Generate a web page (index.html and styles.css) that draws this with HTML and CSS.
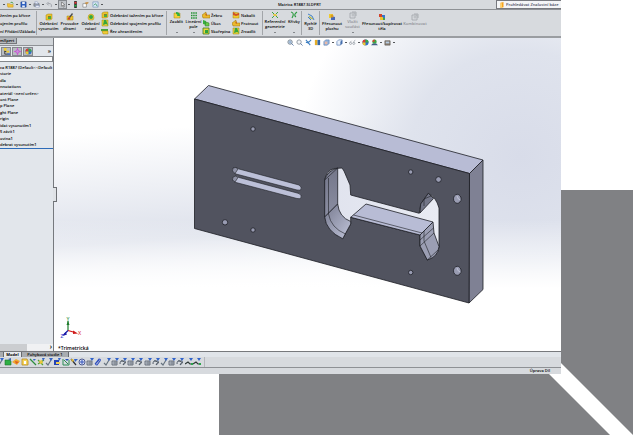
FILE: index.html
```
<!DOCTYPE html>
<html lang="cs">
<head>
<meta charset="utf-8">
<title>Matrica R1887.SLDPRT</title>
<link rel="stylesheet" href="styles.css">
</head>
<body>
<svg class="defs" aria-hidden="true">
  <symbol id="open" viewBox="0 0 8 8"><path d="M0 3h3l1 1h3v3H1z" fill="#f3c53a" stroke="#b98a1b" stroke-width=".5"/><path d="M4 2q2-2 3 1" fill="none" stroke="#3a9a3a"/></symbol>
  <symbol id="save" viewBox="0 0 8 8"><path d="M1 1h6v6H1z" fill="#2f62c4" stroke="#1c3f8c" stroke-width=".6"/><path d="M2.500 1h3v2.500h-3zM2.500 5h3v2h-3z" fill="#e8eefa"/></symbol>
  <symbol id="print" viewBox="0 0 8 8"><path d="M1 3h6v3H1z" fill="#9aa0aa" stroke="#5d636d" stroke-width=".6"/><path d="M2 1h3l1 2H3zM3 5h4v2H3z" fill="#fff" stroke="#6f86b8" stroke-width=".5"/></symbol>
  <symbol id="undo" viewBox="0 0 8 8"><path d="M2 3h3q2 1 1 4M3 1L1 3l2 2" fill="none" stroke="#9a9ea6"/></symbol>
  <symbol id="cursor" viewBox="0 0 8 8"><path d="M3 1v5l1-1 1 2 1-.5-1-2h1.500z" fill="#fff" stroke="#444" stroke-width=".6"/></symbol>
  <symbol id="light" viewBox="0 0 8 8"><path d="M2.500 0h3v8h-3z" fill="#333"/><circle cx="4" cy="2" r="1.200" fill="#e33"/><circle cx="4" cy="5.500" r="1.200" fill="#2b4"/></symbol>
  <symbol id="props" viewBox="0 0 8 8"><path d="M1 3h4v4H1z" fill="#fff" stroke="#777" stroke-width=".7"/><path d="M3 2l3-1 2 1-3 2z" fill="#c69046"/></symbol>
  <symbol id="options" viewBox="0 0 8 8"><path d="M1 1h6v6H1z" fill="#dbe9f8" stroke="#6c8db5" stroke-width=".7"/><path d="M2 5l2-2 2 3" fill="none" stroke="#3e9a68"/></symbol>
  <symbol id="book" viewBox="0 0 8 8"><path d="M2 1l4-1v7l-4 1z" fill="#f7a31e"/><path d="M2 1l2 1v6l-2-1z" fill="#ffd36a"/></symbol>
  <symbol id="cut" viewBox="0 0 8 8"><path d="M1 2l2-1h4v5l-2 1H1z" fill="#e9c32c" stroke="#a98410" stroke-width=".5"/><path d="M3 3h3v3H3z" fill="#4fae3a"/><path d="M3 4l1-1 1 1z" fill="#c33"/></symbol>
  <symbol id="hole" viewBox="0 0 8 8"><path d="M1 3h6v4H1z" fill="#edc22c" stroke="#a98410" stroke-width=".5"/><path d="M3 4l3-4 1 1-3 4z" fill="#4a4a4a"/><circle cx="3" cy="5.500" r="1.200" fill="#c4432a"/></symbol>
  <symbol id="revolve" viewBox="0 0 8 8"><path d="M1 5q0-4 3-4t3 4l-1 2H2z" fill="#f1d23a" stroke="#a98410" stroke-width=".5"/><circle cx="4" cy="4" r="2" fill="#37a83d"/></symbol>
  <symbol id="loft" viewBox="0 0 8 8"><path d="M1 1h6v6H1z" fill="#edd13a" stroke="#8f8b10" stroke-width=".5"/><path d="M2 6l1-5h2l2 5-2-1z" fill="#36a63d"/></symbol>
  <symbol id="bound" viewBox="0 0 8 8"><path d="M0 2h7v2H0z" fill="#46a53a"/><path d="M1 4h6v3H2z" fill="#f0cc35" stroke="#a98410" stroke-width=".5"/></symbol>
  <symbol id="fillet" viewBox="0 0 8 8"><path d="M1 2h6v5H1z" fill="#f1d23a" stroke="#a98410" stroke-width=".5"/><path d="M3 1q4 0 4 4H4q1-2-1-2z" fill="#2fae45"/></symbol>
  <symbol id="pattern" viewBox="0 0 8 8"><path d="M1 2h6M1 4.500h6M1 7h6" stroke="#249334" stroke-width="1.600" stroke-dasharray="1.500 .7"/></symbol>
  <symbol id="rib" viewBox="0 0 8 8"><path d="M0 4l4-3v3h4v3H1z" fill="#edb92c" stroke="#94700d" stroke-width=".5"/><path d="M3 4l2-2v3z" fill="#c96f1d"/></symbol>
  <symbol id="draft" viewBox="0 0 8 8"><path d="M1 1l3 1v4L1 5z" fill="#35ad3c"/><path d="M4 3l3 1v3H3z" fill="#69c949" stroke="#257a25" stroke-width=".5"/></symbol>
  <symbol id="shell" viewBox="0 0 8 8"><path d="M1 1h6v6H1z" fill="#e7d83d" stroke="#3f7c22" stroke-width=".8"/><path d="M3 3h3v3H3z" fill="#2da43b"/></symbol>
  <symbol id="wrap" viewBox="0 0 8 8"><path d="M1 1l6 1v5H1z" fill="#f0ce2f" stroke="#a98410" stroke-width=".5"/><path d="M1 1l3 2 3-1v2L4 5 1 4z" fill="#d0502a"/></symbol>
  <symbol id="ref" viewBox="0 0 8 8"><path d="M1 1l6 6M7 1L1 7" stroke="#3ba348"/><path d="M2 3h3l1 2H3z" fill="#e4c63c"/></symbol>
  <symbol id="curves" viewBox="0 0 8 8"><path d="M1 1q4 1 1 6M7 1Q3 4 6 6" fill="none" stroke="#2a9a3e" stroke-width="1.100"/></symbol>
  <symbol id="instant" viewBox="0 0 8 8"><path d="M1 1l4 2 2 4M1 4l3 3" fill="none" stroke="#3f80c9"/><path d="M2 3l4 3-3-1z" fill="#e8c335" stroke="#9ba93c" stroke-width=".5"/></symbol>
  <symbol id="move" viewBox="0 0 8 8"><path d="M1 1h4v4H1z" fill="#efcb2f"/><path d="M3 3l4 1v3H3z" fill="#4968b8"/><circle cx="4" cy="3" r="1.500" fill="#d99a21"/></symbol>
  <symbol id="bodies" viewBox="0 0 8 8"><path d="M1 1h3v3H1z" fill="#d4442c"/><path d="M4 2h3v3H4z" fill="#3676cb"/><path d="M2 4h3v3H2z" fill="#efc22f"/><path d="M5 5h2v2H5z" fill="#46a544"/></symbol>
  <symbol id="ghost" viewBox="0 0 8 8"><path d="M1 2h5v5H1zM3 1h4v4" fill="none" stroke="#a5a9ae" stroke-width=".9"/><circle cx="4" cy="4" r="1.500" fill="#bcc0c4"/></symbol>
  <symbol id="zoomfit" viewBox="0 0 8 8"><circle cx="3.500" cy="3.500" r="2.500" fill="#dce9f4" stroke="#74808c"/><path d="M5 5l2.500 2.500" stroke="#5877a5"/><path d="M2 3.500h3M3.500 2v3" stroke="#5980b5" stroke-width=".6"/></symbol>
  <symbol id="zoomarea" viewBox="0 0 8 8"><circle cx="3.500" cy="3.500" r="2.500" fill="#f4f6f8" stroke="#8a929b"/><path d="M5 5l2.500 2.500" stroke="#5877a5"/></symbol>
  <symbol id="prev" viewBox="0 0 8 8"><path d="M1 1l5 6M7 1L3 5M1 4l3-1" stroke="#3d7fc2" stroke-width="1.200"/></symbol>
  <symbol id="section" viewBox="0 0 8 8"><path d="M1 1h3v6H1z" fill="#e5ae28"/><path d="M4 1h3v6H4z" fill="#396aa9"/></symbol>
  <symbol id="cube" viewBox="0 0 8 8"><path d="M1 3l2-2h4v4L5 7H1z" fill="#e8f0fa" stroke="#4770ad" stroke-width=".7"/><path d="M5 3l2-2v4L5 7z" fill="#4770ad"/></symbol>
  <symbol id="style" viewBox="0 0 8 8"><path d="M1 3l2-2h4v4L5 7H1z" fill="#8fb4df" stroke="#5f7fae" stroke-width=".7"/><path d="M2 3h3v3H2z" fill="#e9b9a8"/></symbol>
  <symbol id="glasses" viewBox="0 0 8 8"><path d="M3 2L1 4M7 1L5 4" stroke="#8a929b" stroke-width=".7"/><circle cx="1.800" cy="5" r="1.200" fill="none" stroke="#8a929b" stroke-width=".8"/><circle cx="5.500" cy="5" r="1.200" fill="none" stroke="#8a929b" stroke-width=".8"/></symbol>
  <symbol id="ball" viewBox="0 0 8 8"><circle cx="4" cy="4" r="3.500" fill="#2f6fca"/><path d="M4 4V.5A3.500 3.500 0 0 0 .5 4z" fill="#e03b2c"/><path d="M4 4V.5A3.500 3.500 0 0 1 7.500 4z" fill="#3ba845"/><path d="M4 4H.5A3.500 3.500 0 0 0 4 7.500z" fill="#f1c92f"/></symbol>
  <symbol id="stage" viewBox="0 0 8 8"><circle cx="4" cy="3" r="2.500" fill="#3ba845"/><path d="M4 3V.5A2.500 2.500 0 0 0 1.500 3z" fill="#e03b2c"/><path d="M0 7l2-2h4l2 2z" fill="#435f87"/></symbol>
  <symbol id="view" viewBox="0 0 8 8"><path d="M1 2h6v5H1z" fill="#8d8174" stroke="#5a5651" stroke-width=".7"/><path d="M2 3h4v2H2z" fill="#b5cce4"/></symbol>
  <symbol id="tree" viewBox="0 0 8 8"><path d="M2 1v6h4M2 4h2" fill="none" stroke="#333"/><path d="M1 0h3v3H1zM4 3h3v2H4z" fill="#efcc2f"/><path d="M5 6h3v2H5z" fill="#4c70bd"/></symbol>
  <symbol id="target" viewBox="0 0 8 8"><path d="M4 0v8M0 4h8" stroke="#d35ad8" stroke-width="1.200"/><circle cx="4" cy="4" r="2" fill="#cc8ddd" stroke="#b94dc4" stroke-width=".8"/></symbol>
  <symbol id="green" viewBox="0 0 8 8"><path d="M1 2h5l1 1v4H1z" fill="#2fb044" stroke="#20742d" stroke-width=".6"/><path d="M4 1l3-1v3z" fill="#3d66b8"/></symbol>
  <symbol id="orange" viewBox="0 0 8 8"><path d="M0 4l4-3 4 2-3 4z" fill="#f0a82e"/><path d="M3 3l4 1-3 2z" fill="#dc5b22"/></symbol>
  <symbol id="sheet" viewBox="0 0 8 8"><path d="M1 1h5l1 2v4H1z" fill="#f6d558" stroke="#ba8c21" stroke-width=".8"/><path d="M3 3h2v3H3z" fill="#fff"/></symbol>
  <symbol id="line" viewBox="0 0 8 8"><path d="M1 1l6 6" stroke="#2d8d3e" stroke-width="1.200"/><path d="M4 1h3L5 3z" fill="#3666c4"/></symbol>
  <symbol id="star" viewBox="0 0 8 8"><path d="M1 2l5 5M7 2L1 6" stroke="#4f9e31" stroke-width="1.200"/><path d="M2 3l3-1 1 3-3 1z" fill="#e8c73b"/><path d="M5 0h3L6 3z" fill="#3666c4"/></symbol>
  <symbol id="pick" viewBox="0 0 8 8"><path d="M1 1l5 6" stroke="#2c2f36" stroke-width="1.200"/><path d="M1 1h2l1 2-2 1z" fill="#d9b53a"/><path d="M4 1h4L5 4z" fill="#3163cb"/></symbol>
  <symbol id="check" viewBox="0 0 8 8"><path d="M1 5l2 2 3-5" fill="none" stroke="#66737f" stroke-width="1.100"/><path d="M4 0h4L6 3z" fill="#3163cb"/></symbol>
  <symbol id="blue" viewBox="0 0 8 8"><path d="M1 2h5v5H1z" fill="#2543b5"/><path d="M3 4h4v2H3z" fill="#efcf55"/><path d="M5 0h3L6 3z" fill="#3163cb"/></symbol>
  <symbol id="dim" viewBox="0 0 8 8"><path d="M1 1v6h6M2 2l4 4M7 2v5" fill="none" stroke="#2b8b55"/><path d="M3 1h4L5 3z" fill="#234fba"/></symbol>
  <symbol id="rings" viewBox="0 0 8 8"><circle cx="4" cy="4" r="3" fill="#dbe1f5" stroke="#4c5a91"/><path d="M2 4h4M4 2v4" stroke="#3454bb"/></symbol>
  <symbol id="clip" viewBox="0 0 8 8"><path d="M1 6L5 1q2 0 1 2L3 7q-2 0-1-2l3-3" fill="none" stroke="#2f4fc0" stroke-width="1.100"/></symbol>
  <symbol id="mesh" viewBox="0 0 8 8"><path d="M1 3h5v4H1z" fill="#bbc2cc" stroke="#626a74" stroke-width=".9"/><path d="M2 5h4M4 3v4" stroke="#626a74" stroke-width=".6"/><path d="M4 0h4L6 3z" fill="#3163cb"/></symbol>
  <symbol id="knot" viewBox="0 0 8 8"><path d="M1 6q0-4 3-3t0 4q4-2 2-4M2 3h4" fill="none" stroke="#525c69" stroke-width="1"/><path d="M4 0h4L6 3z" fill="#3163cb"/></symbol>
  <symbol id="ramp" viewBox="0 0 8 8"><path d="M0 6l3-2 2 2h3" fill="none" stroke="#303a38" stroke-width="1.200"/><path d="M4 0h4L6 3z" fill="#3163cb"/><path d="M6 5h2v2H6z" fill="#2ba64b"/></symbol>
</svg>

<svg class="backdrop" viewBox="0 0 636 435" preserveAspectRatio="xMaxYMax slice" aria-hidden="true">
  <path d="M219 300H475L610 435H219zM540 190H633V435L540 342z" fill="#808184"/>
</svg>

<div class="app">
  <header class="titlebar">
    <nav class="quick" aria-label="Rychlý přístup">
      <i class="dot"></i><button aria-label="Otevřít"><svg><use href="#open"/></svg></button>
      <i class="dot"></i><button aria-label="Uložit"><svg><use href="#save"/></svg></button>
      <i class="dot"></i><button aria-label="Tisk"><svg><use href="#print"/></svg></button>
      <i class="dot"></i><button aria-label="Zpět"><svg><use href="#undo"/></svg></button>
      <i class="dot"></i><button class="pressed" aria-label="Vybrat"><svg><use href="#cursor"/></svg></button>
      <i class="dot"></i><button aria-label="Obnovit"><svg><use href="#light"/></svg></button>
      <button aria-label="Vlastnosti"><svg><use href="#props"/></svg></button>
      <button aria-label="Možnosti"><svg><use href="#options"/></svg></button><i class="dot"></i>
    </nav>
    <h1>Matrica R1887.SLDPRT</h1>
    <label class="search"><svg><use href="#book"/></svg><input type="text" placeholder="Prohledávat Znalostní báze" aria-label="Prohledávat Znalostní báze"></label>
  </header>

  <div class="ribbon">
    <div class="group first">
      <div class="stack"><button>žením po křivce</button><button>ojením profilů</button><button>ní Přidání/Základu</button></div>
    </div>
    <div class="group cuts">
      <button class="big"><svg><use href="#cut"/></svg>Odebrání vysunutím</button>
      <button class="big"><svg><use href="#hole"/></svg>Průvodce dírami</button>
      <button class="big"><svg><use href="#revolve"/></svg>Odebrání rotací</button>
      <div class="stack"><button><svg><use href="#cut"/></svg>Odebrání tažením po křivce</button><button><svg><use href="#loft"/></svg>Odebrání spojením profilů</button><button><svg><use href="#bound"/></svg>Řez ohraničením</button></div>
    </div>
    <div class="group features">
      <button class="big drop narrow"><svg><use href="#fillet"/></svg>Zaoblit</button>
      <button class="big drop narrow"><svg><use href="#pattern"/></svg>Lineární pole</button>
      <div class="stack"><button><svg><use href="#rib"/></svg>Žebro</button><button><svg><use href="#draft"/></svg>Úkos</button><button><svg><use href="#shell"/></svg>Skořepina</button></div>
      <div class="stack"><button><svg><use href="#wrap"/></svg>Nabalit</button><button><svg><use href="#rib"/></svg>Protnout</button><button><svg><use href="#loft"/></svg>Zrcadlit</button></div>
    </div>
    <div class="group">
      <button class="big drop medium"><svg><use href="#ref"/></svg>Referenční geometrie</button>
      <button class="big drop slim"><svg><use href="#curves"/></svg>Křivky</button>
    </div>
    <div class="group"><button class="big narrow"><svg><use href="#instant"/></svg>Rychlé 3D</button></div>
    <div class="group last">
      <button class="big medium"><svg><use href="#move"/></svg>Přesunout plochu</button>
      <button class="big drop narrow" disabled><svg><use href="#ghost"/></svg>Vložit součást</button>
      <button class="big wide"><svg><use href="#bodies"/></svg>Přesunout/kopírovat<br>těla</button>
      <button class="big medium" disabled><svg><use href="#ghost"/></svg>Kombinovat</button>
    </div>
  </div>

  <div class="work">
    <aside class="side">
      <div class="expert"><button>mXpert</button></div>
      <div class="managers">
        <button aria-label="Strom prvků"><svg><use href="#tree"/></svg></button>
        <button aria-label="DimXpert"><svg><use href="#target"/></svg></button>
        <button aria-label="Vzhled"><svg><use href="#ball"/></svg></button>
        <span class="more">»</span>
      </div>
      <input class="filter" type="text" aria-label="Filtr">
      <ul class="features-tree">
        <li>ca R1887 (Default&lt;&lt;Default</li><li>storie</li><li>dla</li><li>nnotations</li><li>ateriál &lt;není určen&gt;</li><li>ont Plane</li><li>p Plane</li><li>ght Plane</li><li>rigin</li><li>idat vysunutím1</li><li>5 závit1</li><li>ovina1</li><li>debrat vysunutím1</li>
      </ul>
      <div class="scroll"><span class="thumb"></span><span>›</span></div>
      <span class="handle"></span>
    </aside>

    <main class="viewport">
      <div class="headsup">
        <button aria-label="Celý model"><svg><use href="#zoomfit"/></svg></button>
        <button aria-label="Oblast"><svg><use href="#zoomarea"/></svg></button>
        <button aria-label="Předchozí pohled"><svg><use href="#prev"/></svg></button>
        <button aria-label="Řez"><svg><use href="#section"/></svg></button>
        <button aria-label="Orientace"><svg><use href="#style"/></svg></button><i class="dot"></i>
        <button aria-label="Styl zobrazení"><svg><use href="#cube"/></svg></button><i class="dot"></i>
        <button aria-label="Skrýt"><svg><use href="#glasses"/></svg></button><i class="dot"></i>
        <button aria-label="Upravit vzhled"><svg><use href="#ball"/></svg></button>
        <button aria-label="Scéna"><svg><use href="#stage"/></svg></button><i class="dot"></i>
        <button aria-label="Nastavení pohledu"><svg><use href="#view"/></svg></button><i class="dot"></i>
      </div>
      <svg class="model" viewBox="54 38 507 313" role="img" aria-label="Model desky">
        <defs>
          <linearGradient id="bend" x1="0" y1="0" x2="1" y2="1"><stop offset="0" stop-color="#777a8e"/><stop offset="1" stop-color="#c0c4da"/></linearGradient>
          <linearGradient id="wall" x1="0" y1="0" x2="0" y2="1"><stop offset="0" stop-color="#74778a"/><stop offset="1" stop-color="#8b8ea2"/></linearGradient>
          <linearGradient id="through" x1="0" y1="0" x2="1" y2="0"><stop offset="0" stop-color="#e0e3ee"/><stop offset="1" stop-color="#e9ebf3"/></linearGradient>
        </defs>
        <g stroke="#1d1e24" stroke-width=".8" stroke-linejoin="round">
          <path d="M194.500 99L208.500 85.500L483 160L469.500 173.500z" fill="#b8bcd5"/>
          <path d="M469.500 173.500L483 160V289.500L469 303z" fill="#7f8194"/>
          <path d="M194.500 99L469.500 173.500L469 303L194.500 228.500z" fill="#51535f"/>
          <path d="M324.700 180Q326 171 334 168.500L342 168L344 171L350 185L350.700 195L419.300 213.300L420.700 204L428.300 193.300Q436 197 439 208V247Q438 256 427.300 260L420 246V235L350.700 217.300V224L342.700 238.700Q326 231 324.700 216z" fill="url(#through)"/>
          <path d="M324.700 180Q327 171 337.700 168V204L324.700 217z" fill="url(#wall)"/>
          <path d="M324.700 217L337.700 204Q339 217 350.700 221.500V224L342.700 238.700Q326 231 324.700 217z" fill="url(#bend)"/>
          <path d="M328.500 178V214Q331 228 345.500 234M324.700 180L337.700 168" fill="none" stroke-width=".6"/>
          <path d="M350.700 217.300L366 204L433 222L420 235z" fill="#b8bcd5"/>
          <path d="M353.500 215L422 233" fill="none" stroke-width=".6"/>
          <path d="M420 235L433 222L434 233L439 246.500Q438 257 427.300 260L420 246z" fill="#9b9eb3"/>
          <path d="M424 231V241L431 257.500M420 240L433.500 228M420 246L434 233M427.300 260L438 250" fill="none" stroke-width=".6"/>
          <path d="M420.700 204L428.300 193.300L433.500 198.500L420 213z" fill="#737688"/>
          <path d="M424 206V199L431 196" fill="none" stroke-width=".6"/>
          <path d="M233 168Q236 166.500 239 169L299 185Q302 187 301 189.500Q300 190.500 297 190L236 174Q231 172 233 168zM233 177Q236 175 239 177.500L299 193.500Q302 195.500 301 198Q300 199 297 198.500L236 182.500Q231 181 233 177z" fill="#bcc0d8" stroke-width=".6"/>
          <path d="M233 168Q236 166.500 238 169L235 173.500Q231 171 233 168zM233 177Q236 175 238 177.500L235 182Q231 180 233 177z" fill="#8f92a6" stroke-width=".6"/>
          <g fill="#999cb2">
            <circle cx="253" cy="129" r="2.200"/><circle cx="253" cy="230" r="2.200"/><circle cx="225" cy="222.300" r="2.700"/>
            <circle cx="410.700" cy="172" r="2.200"/><circle cx="410.700" cy="272.500" r="2.200"/><circle cx="438.500" cy="179.500" r="2.800"/>
            <ellipse cx="457.300" cy="198.800" rx="3.800" ry="4.500"/><ellipse cx="457.300" cy="270.800" rx="3.800" ry="4.500"/>
          </g>
          <path d="M457 196Q458 200 460.500 200M457 268Q458 272 460.500 272" fill="none" stroke="#c9cce0"/>
        </g>
        <g fill="none" stroke-width="1.200">
          <path d="M68 330.500V321" stroke="#1c7a2a"/><path d="M68 330.500L75 332.500" stroke="#cf1a1a"/><path d="M68 330.500L63.500 335" stroke="#1a1aa8"/>
          <path d="M66.500 325L68 321L69.500 325z" fill="#1c7a2a" stroke="none"/><path d="M73 330.500L78 333.500L73 334z" fill="#cf1a1a" stroke="none"/><path d="M65.500 332L62.500 336L67 334.500z" fill="#1a1aa8" stroke="none"/>
        </g>
        <g class="axes"><text x="66.500" y="321" fill="#4aa05a">Y</text><text x="78" y="335" fill="#e04848">X</text><text x="60.500" y="338" fill="#4848cc">Z</text></g>
      </svg>
      <p class="orientation">*Trimetrická</p>
    </main>
  </div>

  <div class="tabs"><span class="stub"></span><button class="active">Model</button><button>Pohybová studie 1</button></div>
  <div class="tools"><div class="strip">
    <svg><use href="#check"/></svg><svg><use href="#green"/></svg><svg><use href="#orange"/></svg><svg><use href="#sheet"/></svg><svg><use href="#line"/></svg><svg><use href="#star"/></svg><svg><use href="#check"/></svg><svg><use href="#blue"/></svg><svg><use href="#dim"/></svg><svg><use href="#pick"/></svg><svg><use href="#rings"/></svg><svg><use href="#mesh"/></svg><svg><use href="#clip"/></svg><svg><use href="#check"/></svg><svg><use href="#mesh"/></svg><svg><use href="#knot"/></svg><svg><use href="#mesh"/></svg><svg><use href="#knot"/></svg><svg><use href="#mesh"/></svg><svg><use href="#knot"/></svg><svg><use href="#check"/></svg><svg><use href="#mesh"/></svg><svg><use href="#knot"/></svg><svg><use href="#ramp"/></svg><svg><use href="#ramp"/></svg>
  </div></div>
  <footer class="status">Úprava Díl</footer>
</div>
</body>
</html>
```
FILE: styles.css
```
* { box-sizing: border-box; }
body {
  margin: 0;
  min-height: 100vh;
  padding: 0 75px 61px 0;
  display: flex;
  background: #fff;
  color: #000;
  font: 600 4px/5px "Open Sans", sans-serif;
}
button, input {
  margin: 0;
  padding: 0;
  border: 0;
  background: none;
  color: inherit;
  font: inherit;
}
button:disabled { color: #8b8f94; }
svg { display: block; flex: none; width: 8px; height: 8px; }
.defs { position: absolute; width: 0; height: 0; }
.backdrop { position: absolute; inset: 0; width: 100%; height: 100%; }
.app {
  position: relative;
  flex: 1;
  min-width: 0;
  display: flex;
  flex-direction: column;
  background: #d7dade;
  overflow: hidden;
}
.dot { flex: none; width: 2px; height: 1px; background: #55585c; }

.titlebar {
  height: 10px;
  display: grid;
  grid-template-columns: 1fr auto 1fr;
  align-items: center;
  border-bottom: 1px solid #8e9195;
}
.quick { display: flex; align-items: center; gap: 1px; padding-left: 3px; }
.quick button { width: 9px; height: 9px; display: grid; place-items: center; }
.quick svg { width: 7px; height: 7px; }
.quick .pressed { background: #bfc3c8; outline: 1px solid #85898e; outline-offset: -1px; }
h1 { margin: 0; padding-left: 38px; font-size: 4px; font-weight: 600; white-space: nowrap; }
.search {
  justify-self: end;
  width: 65px;
  height: 9px;
  display: flex;
  align-items: center;
  gap: 1px;
  padding-left: 2px;
  background: #f4f5f7;
  border: 1px solid #77797f;
  border-right: 0;
}
.search svg { width: 6px; height: 6px; }
.search input { flex: 1; min-width: 0; height: 6px; }
.search input::placeholder { color: #44475a; opacity: 1; }

.ribbon { height: 28px; display: flex; border-bottom: 2px solid #9a9da1; white-space: nowrap; }
.group { display: flex; border-right: 1px solid #a2a5a9; margin: 1px 0; }
.first { width: 37px; }
.cuts { width: 130px; padding-left: 1px; }
.features { width: 96px; padding-left: 1px; }
.last { border: 0; }
.stack { display: flex; flex-direction: column; justify-content: space-around; flex: 1; }
.stack button { display: flex; align-items: center; gap: 1px; height: 8px; text-align: left; }
.big {
  position: relative;
  width: 21px;
  display: flex;
  flex-direction: column;
  align-items: center;
  padding-top: 2px;
  white-space: normal;
  text-align: center;
}
.medium { width: 24px; }
.narrow { width: 17px; }
.slim { width: 14px; }
.wide { width: 42px; }
.drop { padding-top: 0; }
.drop::after {
  content: "";
  position: absolute;
  bottom: 1px;
  border: 1px solid transparent;
  border-top-color: #33363a;
}

.work { flex: 1; display: flex; min-height: 0; }
.side {
  position: relative;
  width: 54px;
  display: flex;
  flex-direction: column;
  background: #e2e6eb;
  border-right: 1px solid #76797e;
  white-space: nowrap;
}
.expert { height: 8px; background: #d2d6da; border-bottom: 1px solid #8f9296; }
.expert button { width: 17px; height: 6px; background: #b5b8bc; border: 1px solid #75787c; border-width: 0 1px 1px 0; line-height: 5px; text-align: left; }
.managers { height: 10px; display: flex; align-items: center; gap: 1px; padding-left: 1px; }
.managers button { width: 10px; height: 9px; display: grid; place-items: center; background: #b9bcc1; border: 1px solid #85888d; }
.managers svg { width: 7px; height: 7px; }
.more { margin-left: auto; padding-right: 2px; font-size: 6px; }
.filter { width: 100%; height: 6px; background: #fafbfc; border: 1px solid #84878b; border-left: 0; }
.features-tree {
  height: 87px;
  margin: 0;
  padding: 2px 0 0;
  list-style: none;
  display: grid;
  grid-auto-rows: 1fr;
  align-items: center;
  border-bottom: 1px solid #2d6bb8;
}
.scroll { margin-top: auto; height: 7px; display: flex; justify-content: space-between; padding-right: 1px; background: #f0f1f3; font-size: 7px; line-height: 6px; }
.thumb { width: 27px; background: #cbcdd0; }
.handle { position: absolute; left: 53px; top: 149px; z-index: 1; width: 4px; height: 15px; background: #dfe2e6; border: 1px solid #6d7074; border-left: 0; }

.viewport {
  position: relative;
  flex: 1;
  min-width: 0;
  background:
    linear-gradient(180deg, transparent 58%, #fff 80%),
    radial-gradient(ellipse 44% 68% at 92% 38%, #d8dce9 0, #dfe3ed 50%, transparent 100%),
    linear-gradient(176deg, #fff 28%, #dde1eb 60%, #fff 78%);
}
.model { position: absolute; inset: 0; width: 100%; height: 100%; }
.axes { font-size: 5px; }
.headsup { position: absolute; top: 0; left: 46%; z-index: 1; display: flex; align-items: center; gap: 2px; height: 8px; }
.headsup button { width: 7px; }
.headsup svg { width: 7px; height: 7px; }
.orientation { position: absolute; left: 4px; bottom: 0; margin: 0; font-size: 5px; }

.tabs { height: 6px; display: flex; background: #e0e4e9; border-top: 1px solid #77797d; }
.tabs button { width: 47px; background: #a9acb0; border-right: 1px solid #66696d; line-height: 5px; }
.tabs .active { width: 18px; background: #e6e9ed; font-weight: 700; }
.stub { width: 4px; background: #a9acb0; border-right: 1px solid #66696d; }
.tools { height: 11px; border-bottom: 1px solid #8e9195; }
.strip { width: 209px; height: 10px; display: flex; align-items: center; justify-content: space-between; padding-right: 3px; border-right: 1px solid #b4b7bb; margin-left: -4px; }
.status { height: 6px; padding-right: 11px; text-align: right; line-height: 6px; }
```
